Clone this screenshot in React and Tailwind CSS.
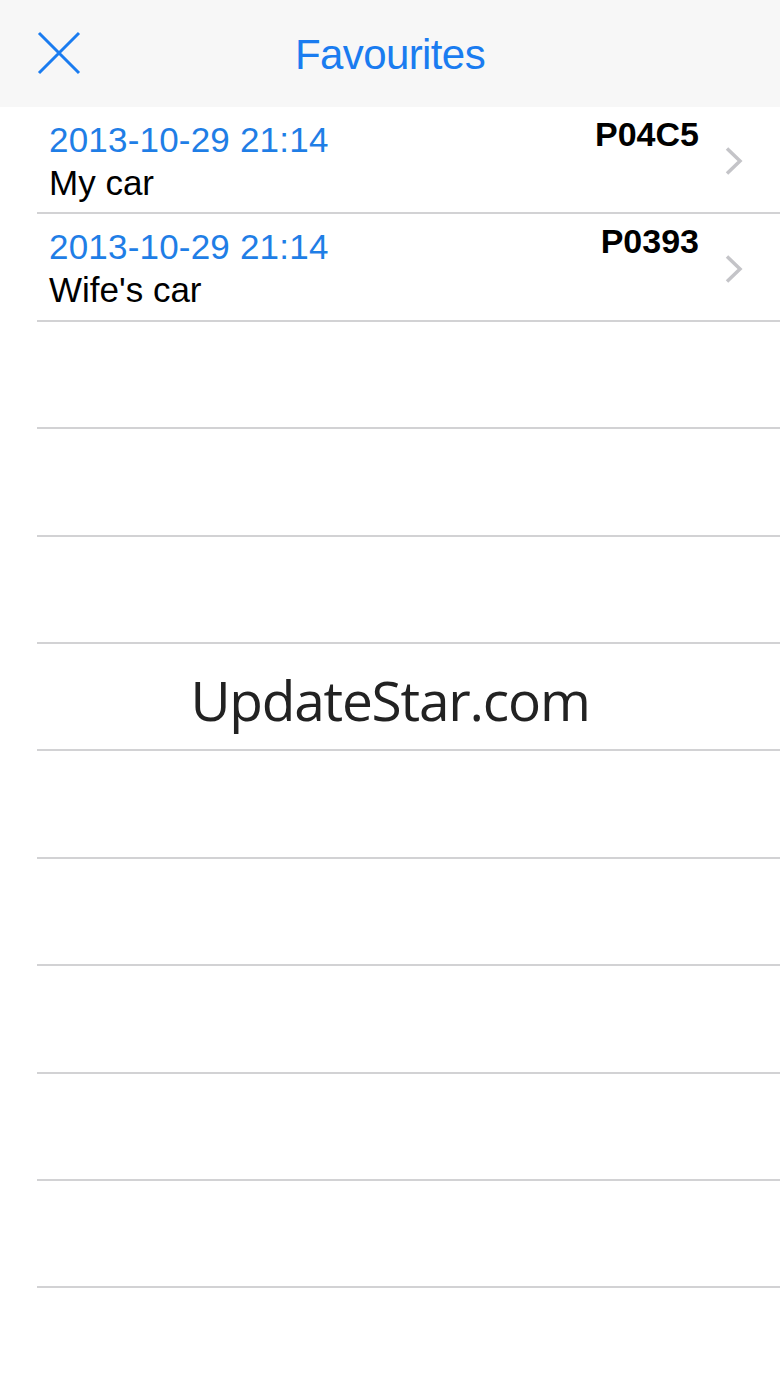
const favourites = [
  { date: '2013-10-29 21:14', name: 'My car', code: 'P04C5' },
  { date: '2013-10-29 21:14', name: "Wife's car", code: 'P0393' },
]

// empty rows fill the rest of the table
const blanks = Array.from({ length: 10 })

function CloseIcon() {
  return (
    <svg width="44" height="44" viewBox="0 0 44 44" fill="none">
      <path d="M2 2 L42 42 M42 2 L2 42" stroke="#1a7cf0" strokeWidth="3" />
    </svg>
  )
}

function Chevron() {
  return (
    <svg width="20" height="30" viewBox="0 0 20 30" fill="none">
      <path d="M3 2.5 L16 15 L3 27.5" stroke="#c4c4c8" strokeWidth="3.5" />
    </svg>
  )
}

function FavouriteRow({ item }) {
  return (
    <div className="ml-[37px] h-[107.4px] border-b-2 border-[#d2d2d4] flex items-start pl-3 pr-[36px]">
      <div className="flex-1 pt-[11px] leading-[44px]">
        <div className="text-[35px] text-[#1f7ee6] tracking-[0.2px]">{item.date}</div>
        <div className="text-[35px] text-black -mt-[1px]">{item.name}</div>
      </div>
      <div className="pt-[5px] text-[34px] font-bold text-black leading-[44px]">{item.code}</div>
      <div className="self-center ml-[25px] pt-[3px]">
        <Chevron />
      </div>
    </div>
  )
}

export default function App() {
  return (
    <div className="relative w-[780px] h-[1387px] bg-white overflow-hidden font-['Liberation_Sans',Arial,sans-serif]">
      <header className="h-[107px] bg-[#f7f7f7] flex items-center relative">
        <div className="absolute left-[37px] top-[31px]">
          <CloseIcon />
        </div>
        <h1 className="w-full text-center text-[42px] text-[#1a7cf0] tracking-[-0.6px] pt-[2px]">
          Favourites
        </h1>
      </header>

      <div>
        {favourites.map((item) => (
          <FavouriteRow key={item.code} item={item} />
        ))}
        {blanks.map((_, i) => (
          <div key={i} className="ml-[37px] h-[107.4px] border-b-2 border-[#d2d2d4]" />
        ))}
      </div>

      <div className="absolute left-0 right-0 top-[665px] text-center text-[55px] text-[#222] font-['Open_Sans',sans-serif] leading-[70px] tracking-[-1.2px]">
        UpdateStar.com
      </div>
    </div>
  )
}
